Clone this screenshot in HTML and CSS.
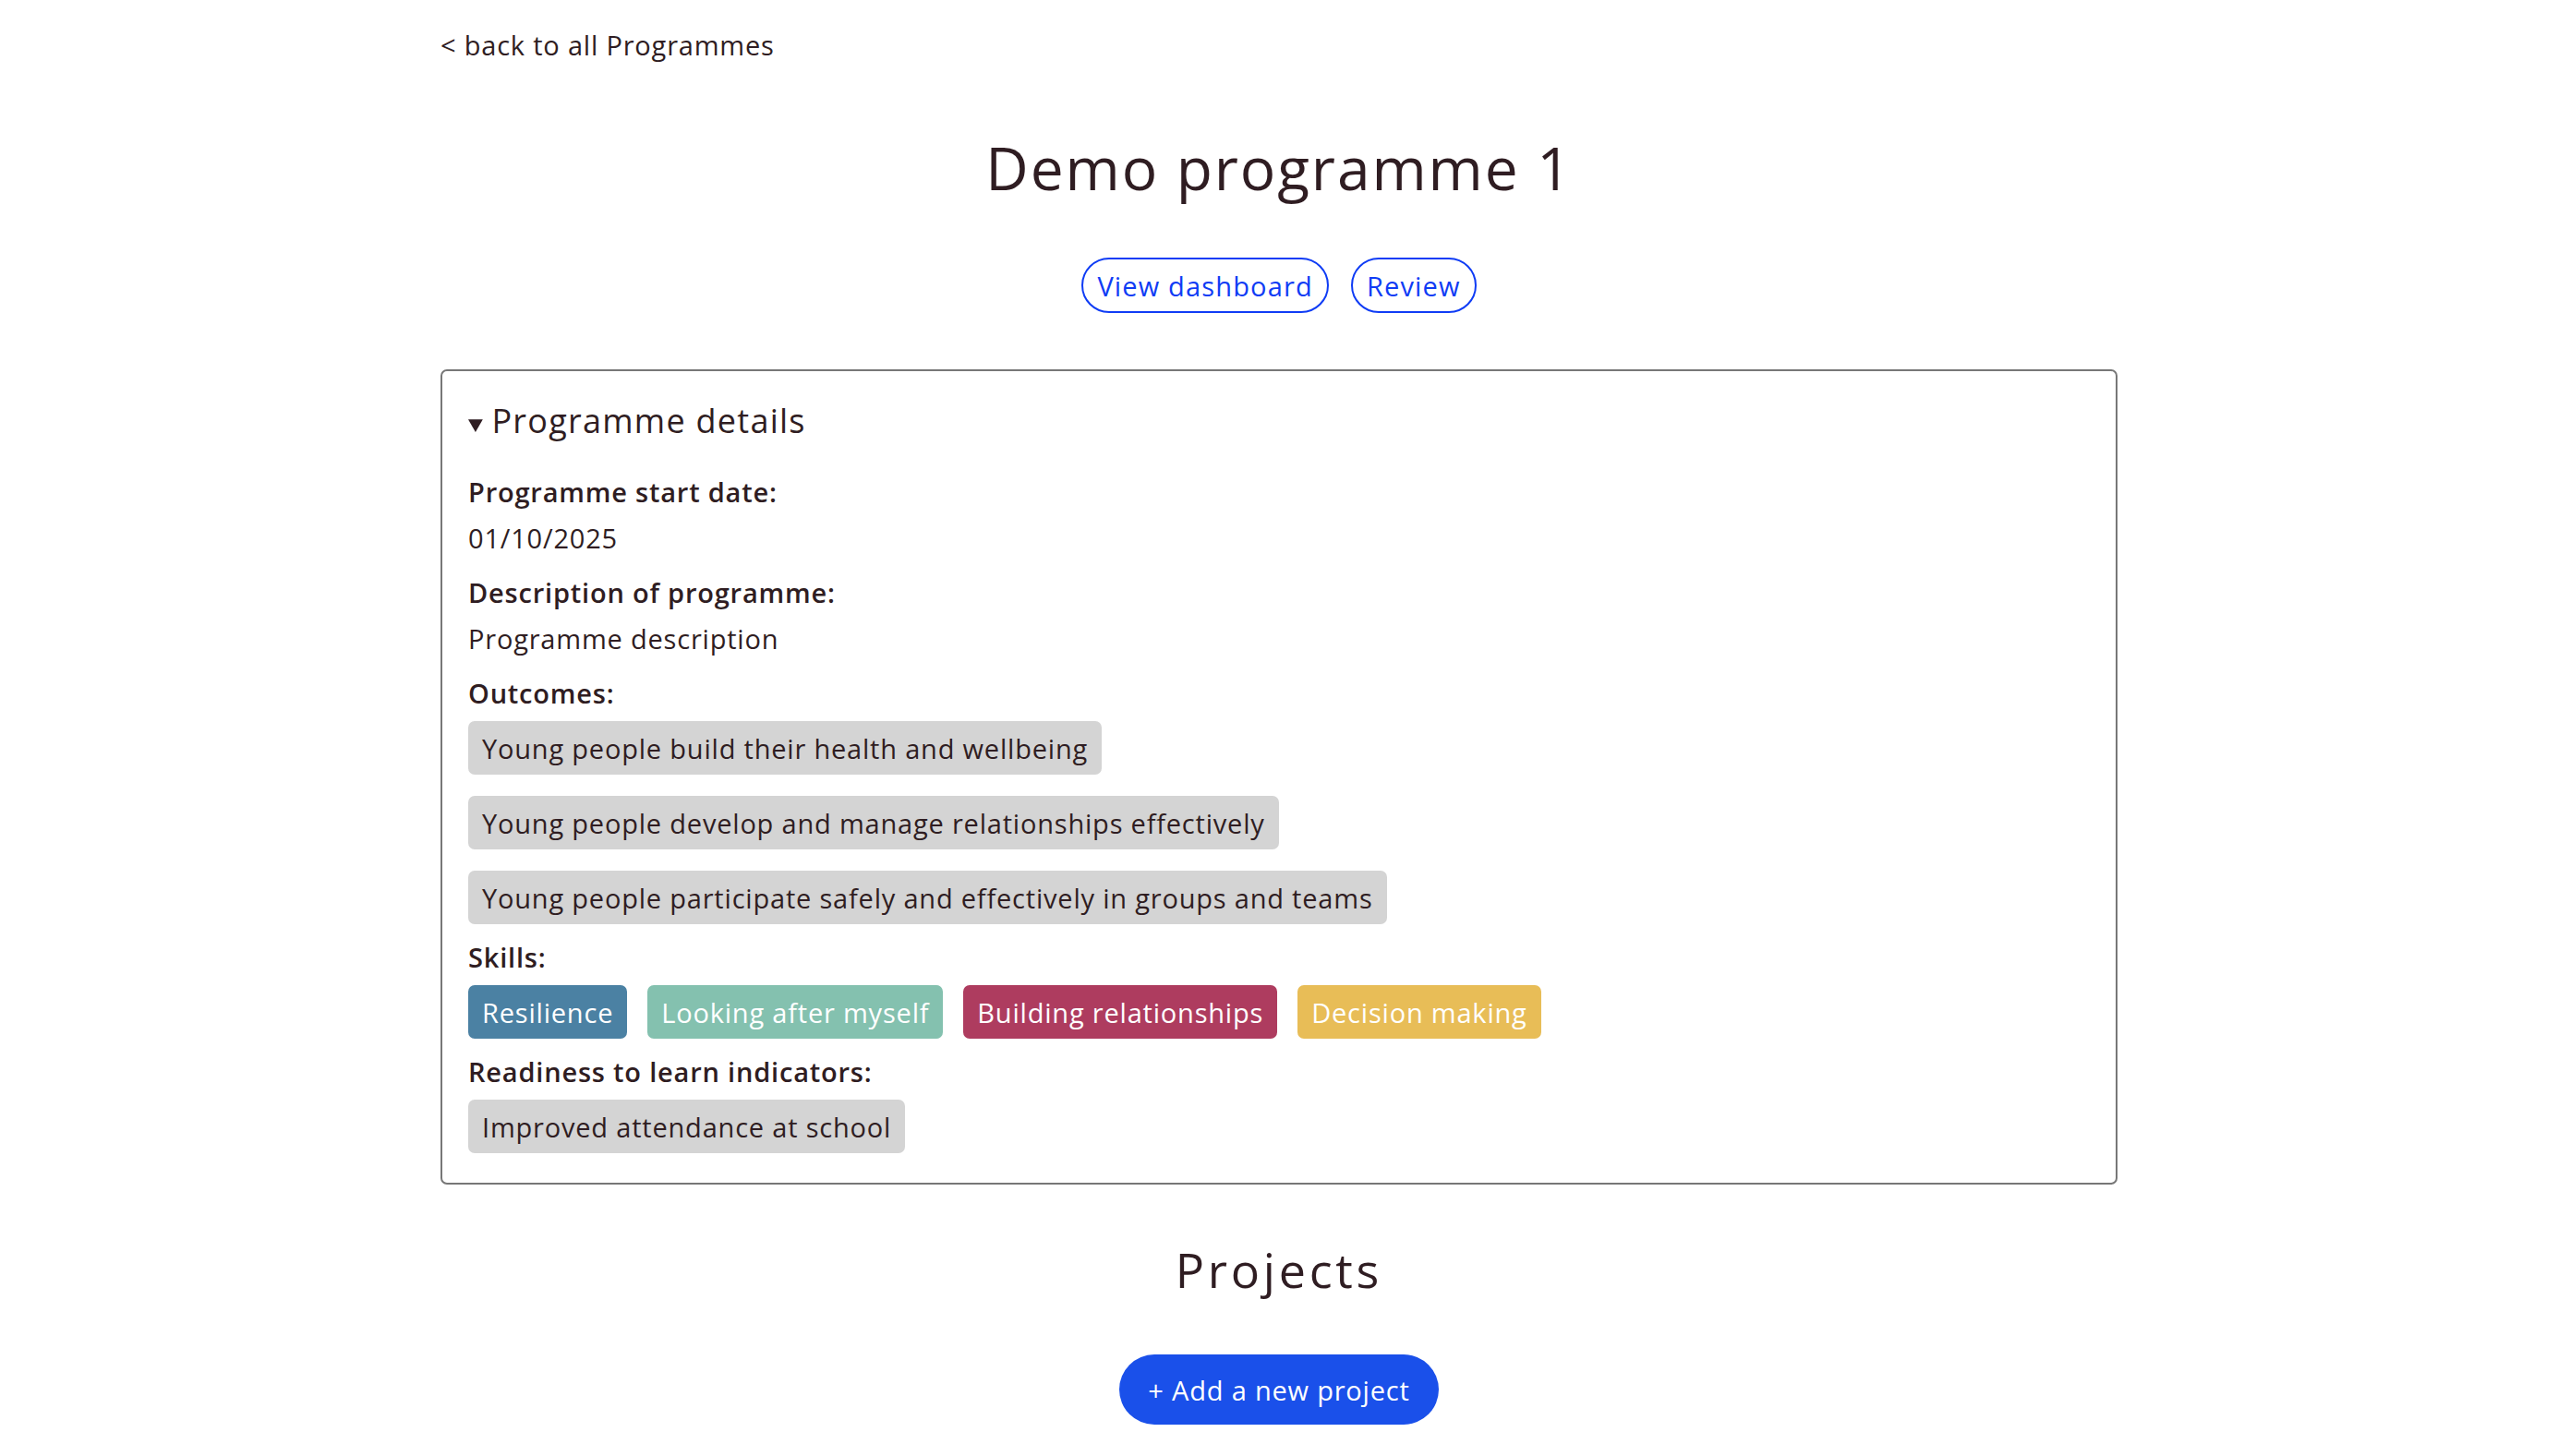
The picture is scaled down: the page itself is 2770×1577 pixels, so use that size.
FILE: index.html
```html
<!DOCTYPE html>
<html lang="en">
<head>
<meta charset="utf-8">
<title>Demo programme 1</title>
<link rel="stylesheet" href="styles.css">
</head>
<body>
<div class="page">
  <a class="back" href="#">&lt; back to all Programmes</a>
  <h1 class="title">Demo programme 1</h1>
  <div class="actions">
    <a class="btn-outline" href="#">View dashboard</a>
    <a class="btn-outline" href="#">Review</a>
  </div>
  <details class="card" open>
    <summary class="card-summary">Programme details</summary>
    <div class="label">Programme start date:</div>
    <div class="value">01/10/2025</div>
    <div class="label">Description of programme:</div>
    <div class="value">Programme description</div>
    <div class="label">Outcomes:</div>
    <div class="tag-col">
      <span class="tag">Young people build their health and wellbeing</span>
      <span class="tag">Young people develop and manage relationships effectively</span>
      <span class="tag">Young people participate safely and effectively in groups and teams</span>
    </div>
    <div class="label">Skills:</div>
    <div class="tag-row">
      <span class="tag skill-blue">Resilience</span>
      <span class="tag skill-teal">Looking after myself</span>
      <span class="tag skill-red">Building relationships</span>
      <span class="tag skill-yellow">Decision making</span>
    </div>
    <div class="label">Readiness to learn indicators:</div>
    <div class="tag-row">
      <span class="tag">Improved attendance at school</span>
    </div>
  </details>
  <h2 class="section-title">Projects</h2>
  <div class="add-wrap">
    <a class="btn-primary" href="#">+ Add a new project</a>
  </div>
</div>
</body>
</html>
```
FILE: styles.css
```css
* { box-sizing: border-box; }
html, body { margin: 0; padding: 0; background: #fff; }
body {
  font-family: "Open Sans", "Noto Sans", "Liberation Sans", sans-serif;
  color: #2f1d22;
  letter-spacing: 0.8px;
}
.page {
  width: 1816px;
  margin: 0 auto;
  padding-top: 28px;
  padding-bottom: 40px;
}
.back {
  display: block;
  font-size: 29px;
  line-height: 42px;
  color: #2f1d22;
  text-decoration: none;
}
.title {
  margin: 72px 0 0;
  font-size: 64px;
  line-height: 80px;
  font-weight: 400;
  letter-spacing: 0.03em;
  text-align: center;
}
.actions {
  margin-top: 57px;
  display: flex;
  justify-content: center;
  gap: 24px;
}
.btn-outline {
  display: flex;
  align-items: center;
  height: 60px;
  padding: 0 15px;
  border: 2px solid #0f3cf5;
  border-radius: 30px;
  color: #0f3cf5;
  font-size: 29px;
  letter-spacing: 0.04em;
  text-decoration: none;
}
.card {
  margin-top: 61px;
  border: 2px solid #777;
  border-radius: 7px;
  padding: 30px 28px 32px;
}
.card-summary {
  font-size: 36px;
  line-height: 48px;
  letter-spacing: 0.035em;
  cursor: pointer;
}
.card-summary::marker { font-size: 24px; }
.label {
  font-size: 29px;
  line-height: 40px;
  font-weight: 600;
  margin-top: 19px;
}
.card-summary + .label { margin-top: 29px; }
.tag-col + .label,
.tag-row + .label { margin-top: 16px; }
.value {
  font-size: 29px;
  line-height: 40px;
  margin-top: 10px;
}
.tag-col {
  margin-top: 10px;
  display: flex;
  flex-direction: column;
  align-items: flex-start;
  gap: 23px;
}
.tag-row {
  margin-top: 10px;
  display: flex;
  gap: 22px;
}
.tag {
  display: inline-flex;
  align-items: center;
  height: 58px;
  padding: 0 15px;
  border-radius: 7px;
  background: #d4d4d4;
  font-size: 29px;
  color: #2f1d22;
}
.skill-blue { background: #4b81a3; color: #fff; }
.skill-teal { background: #84c1af; color: #fff; }
.skill-red { background: #ae3c5f; color: #fff; }
.skill-yellow { background: #e8bd57; color: #fff; }
.section-title {
  margin: 60px 0 0;
  font-size: 52px;
  line-height: 64px;
  font-weight: 400;
  letter-spacing: 0.072em;
  text-align: center;
}
.add-wrap {
  margin-top: 60px;
  display: flex;
  justify-content: center;
}
.btn-primary {
  display: flex;
  align-items: center;
  height: 76px;
  padding: 0 31px;
  border-radius: 38px;
  background: #1a50ea;
  color: #fff;
  font-size: 29px;
  text-decoration: none;
}
```
